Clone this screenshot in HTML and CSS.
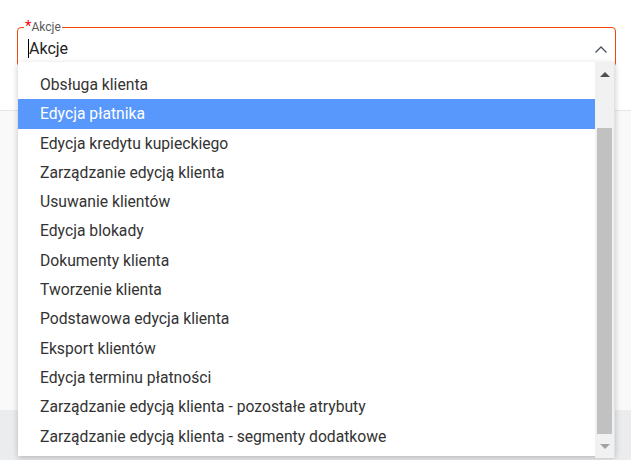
FILE: index.html
```html
<!DOCTYPE html>
<html lang="pl">
<head>
<meta charset="utf-8">
<link rel="stylesheet" href="styles.css">
</head>
<body>
<div class="page">
  <div class="top">
    <div class="field">
      <span class="label"><span class="req">*</span>Akcje</span>
      <div class="value"><span class="caret"></span>Akcje</div>
      <svg class="chev" width="14" height="9" viewBox="0 0 14 9"><path d="M1.5 7.5 L7 2 L12.5 7.5" fill="none" stroke="#4a5060" stroke-width="1.3"/></svg>
    </div>
  </div>
  <div class="panel"></div>
  <div class="footer"></div>

  <div class="dropdown">
    <ul class="list">
      <li>Obsługa klienta</li>
      <li class="active">Edycja płatnika</li>
      <li>Edycja kredytu kupieckiego</li>
      <li>Zarządzanie edycją klienta</li>
      <li>Usuwanie klientów</li>
      <li>Edycja blokady</li>
      <li>Dokumenty klienta</li>
      <li>Tworzenie klienta</li>
      <li>Podstawowa edycja klienta</li>
      <li>Eksport klientów</li>
      <li>Edycja terminu płatności</li>
      <li>Zarządzanie edycją klienta - pozostałe atrybuty</li>
      <li>Zarządzanie edycją klienta - segmenty dodatkowe</li>
    </ul>
    <div class="scrollbar">
      <div class="arrow up"></div>
      <div class="track"><div class="thumb"></div></div>
      <div class="arrow down"></div>
    </div>
  </div>
</div>
</body>
</html>
```

FILE: styles.css
```css
* { box-sizing: border-box; }
html, body { margin: 0; padding: 0; }
body {
  font-family: Roboto, "Liberation Sans", Arial, sans-serif;
  color: #333;
  width: 631px;
  height: 460px;
  overflow: hidden;
  background: #fff;
}
.page {
  position: relative;
  width: 631px;
  height: 460px;
  display: flex;
  flex-direction: column;
}
.top {
  height: 110px;
  padding: 27px 15px 0 17px;
  background: #fff;
}
.field {
  position: relative;
  height: 40px;
  border: 1px solid #f5460a;
  border-radius: 4px;
  display: flex;
  align-items: center;
  padding: 0 7px 0 10px;
}
.label {
  position: absolute;
  top: -10px;
  left: 6px;
  background: #fff;
  padding: 0 1px;
  font-size: 12px;
  line-height: 16px;
  color: #5a5a5a;
}
.req {
  color: #f00;
  font-size: 15px;
}
.value {
  flex: 1;
  font-size: 16px;
  color: #222;
  display: flex;
  align-items: center;
  margin-top: 2px;
}
.caret {
  width: 1px;
  height: 19px;
  background: #000;
}
.chev {
  margin-top: 4px;
}
.panel {
  height: 300px;
  border-top: 1px solid #e6e6e6;
  background: #f9f9f9;
}
.footer {
  flex: 1;
  background: #ebecee;
}
.dropdown {
  position: absolute;
  top: 62px;
  left: 18px;
  width: 597px;
  height: 394px;
  background: #fff;
  box-shadow: 0 2px 6px rgba(0,0,0,0.22);
  display: grid;
  grid-template-columns: 1fr 20px;
}
.list {
  list-style: none;
  margin: 0;
  padding: 8px 0 0 0;
}
.list li {
  height: 29.3px;
  line-height: 29.3px;
  padding-left: 22px;
  font-size: 15.7px;
  color: #333;
  white-space: nowrap;
}
.list li.active {
  background: #5897fb;
  color: #fff;
}
.scrollbar {
  background: #f1f1f1;
  display: flex;
  flex-direction: column;
  border-right: 1px solid #e2e2e2;
}
.arrow {
  height: 24px;
  display: flex;
  align-items: center;
  justify-content: center;
}
.arrow::before {
  content: "";
  width: 0;
  height: 0;
  border-left: 5px solid transparent;
  border-right: 5px solid transparent;
}
.arrow.up::before { border-bottom: 5px solid #505050; }
.arrow.down::before { border-top: 5px solid #a3a3a3; }
.track {
  flex: 1;
  padding: 42px 2px 0 2px;
}
.thumb {
  height: 306px;
  background: #c1c1c1;
}
```
